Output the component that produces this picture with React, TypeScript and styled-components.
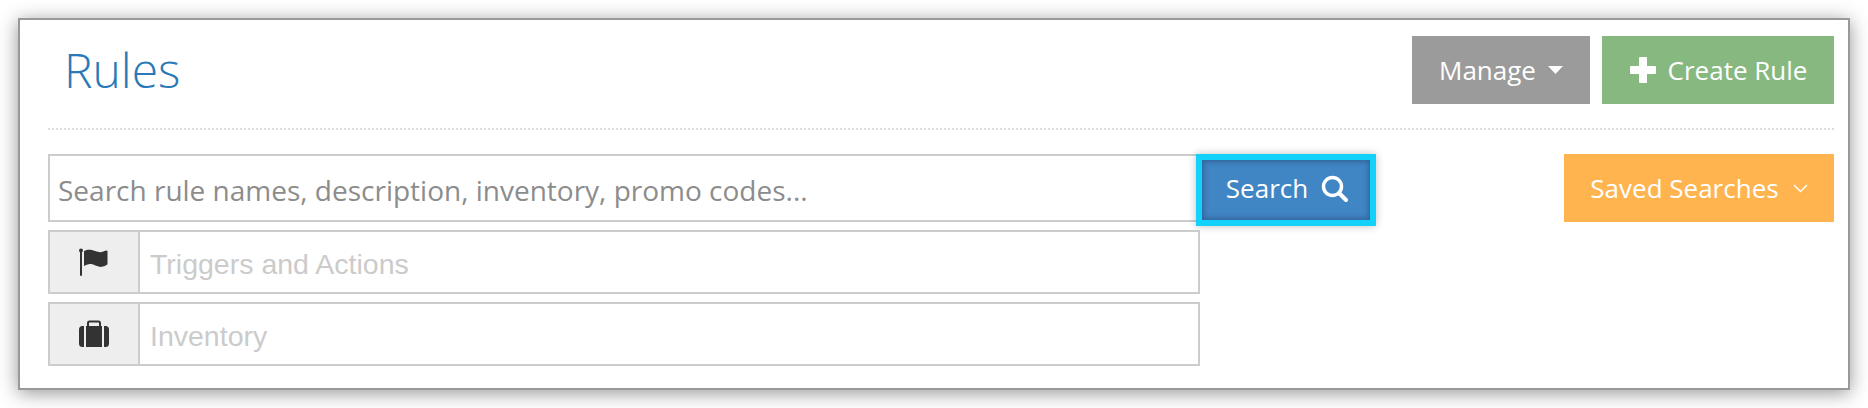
import styled, { createGlobalStyle } from "styled-components";

const GlobalStyle = createGlobalStyle`
    html, body {
        margin: 0;
        padding: 0;
        background: #ffffff;
    }
    * {
        box-sizing: border-box;
    }
`;

const Page = styled.div`
    width: 1868px;
    height: 408px;
    padding: 18px;
    overflow: hidden;
`;

const Panel = styled.section`
    width: 1832px;
    height: 372px;
    border: 2px solid #999;
    background: #fff;
    padding: 16px 14px 0 28px;
    box-shadow: 0 3px 18px rgba(0, 0, 0, 0.42);
`;

const Header = styled.header`
    display: flex;
    justify-content: space-between;
    align-items: flex-start;
    height: 94px;
    border-bottom: 2px dotted #ddd;
`;

const Title = styled.h1`
    margin: 0 0 0 16px;
    font-family: "Open Sans", sans-serif;
    font-weight: 300;
    font-size: 48px;
    line-height: 68px;
    color: #2a7ab8;
`;

const Actions = styled.div`
    display: flex;
    gap: 12px;
`;

const Button = styled.button<{ $bg: string; $width: number }>`
    display: flex;
    align-items: center;
    justify-content: center;
    height: 68px;
    width: ${({ $width }) => $width}px;
    border: 0;
    padding: 0;
    background: ${({ $bg }) => $bg};
    color: #fff;
    font-family: "Open Sans", sans-serif;
    font-size: 26px;
    font-weight: 400;
`;

const SearchArea = styled.div`
    display: flex;
    justify-content: space-between;
    align-items: flex-start;
    margin-top: 24px;
`;

const Filters = styled.div`
    display: flex;
    flex-direction: column;
    gap: 8px;
    width: 1152px;
`;

const SearchRow = styled.div`
    display: flex;
    width: 1328px;
    margin-bottom: -4px;
`;

const SearchInput = styled.input`
    width: 1150px;
    height: 68px;
    border: 2px solid #ccc;
    padding: 3px 8px 0;
    outline: none;
    font-family: "Open Sans", sans-serif;
    font-size: 28px;
    color: #555;

    &::placeholder {
        color: #8c8c8c;
        opacity: 1;
    }
`;

const SearchButton = styled.button`
    display: flex;
    align-items: center;
    justify-content: center;
    gap: 12px;
    flex: none;
    width: 180px;
    height: 72px;
    margin-left: -2px;
    border: 6px solid #12d1fb;
    padding: 0 0 4px 2px;
    background: #4085c4;
    color: #fff;
    font-family: "Open Sans", sans-serif;
    font-size: 26px;
    box-shadow: inset 0 0 5px 2px #33659c, 0 0 8px rgba(0, 0, 0, 0.25);
`;

const FilterRow = styled.div`
    display: flex;
    height: 64px;
    border: 2px solid #ccc;
`;

const FilterAddon = styled.div`
    display: flex;
    align-items: center;
    justify-content: center;
    flex: none;
    width: 90px;
    background: #eee;
    border-right: 2px solid #ccc;
`;

const FilterInput = styled.input`
    flex: 1;
    min-width: 0;
    border: 0;
    padding: 4px 10px 0;
    outline: none;
    font-family: "Liberation Sans", Arial, sans-serif;
    font-size: 28.5px;
    color: #555;

    &::placeholder {
        color: #cbcbcb;
        opacity: 1;
    }
`;

const Label = styled.span<{ $before?: number; $after?: number }>`
    margin-left: ${({ $before }) => $before ?? 0}px;
    margin-right: ${({ $after }) => $after ?? 0}px;
`;

const Caret = () => (
    <svg width="15" height="8" viewBox="0 0 15 8">
        <path d="M0 0h15L7.500 8z" fill="#fff" />
    </svg>
);

const Chevron = () => (
    <svg width="15" height="9" viewBox="0 0 15 9">
        <path d="M1 1l6.500 6.500L14 1" fill="none" stroke="#fff" strokeWidth="1.500" />
    </svg>
);

const Plus = () => (
    <svg width="28" height="28" viewBox="0 0 28 28">
        <path
            d="M10 2a1 1 0 0 1 1-1h6a1 1 0 0 1 1 1v8h8a1 1 0 0 1 1 1v6a1 1 0 0 1-1 1h-8v8a1 1 0 0 1-1 1h-6a1 1 0 0 1-1-1v-8H2a1 1 0 0 1-1-1v-6a1 1 0 0 1 1-1h8z"
            fill="#fff"
        />
    </svg>
);

const SearchIcon = () => (
    <svg width="28" height="28" viewBox="0 0 28 28">
        <circle cx="12.500" cy="12.500" r="9" fill="none" stroke="#fff" strokeWidth="3.500" />
        <path d="M19 19l7 7" stroke="#fff" strokeWidth="4" strokeLinecap="round" />
    </svg>
);

const FlagIcon = () => (
    <svg width="32" height="28" viewBox="0 0 32 28">
        <path d="M3 2v25" stroke="#333" strokeWidth="2" strokeLinecap="round" />
        <circle cx="3" cy="2.500" r="2" fill="#333" />
        <path
            d="M6 3c4-2 7-1.500 11 0 4 1.500 7 1.500 9.500 0 1-.6 3-1 3 .5V16c0 1-5 3.500-8 2.800-4-.8-6.500-3.300-10-2.800-2 .3-5.500 2-5.500 2z"
            fill="#333"
        />
    </svg>
);

const BriefcaseIcon = () => (
    <svg width="32" height="28" viewBox="0 0 32 28">
        <path d="M10 6V3a1.500 1.500 0 0 1 1.500-1.500h9A1.500 1.500 0 0 1 22 3v3" fill="none" stroke="#333" strokeWidth="2" />
        <path d="M4.500 6H6v21H4.500A3.500 3.500 0 0 1 1 23.500v-14A3.500 3.500 0 0 1 4.500 6z" fill="#333" />
        <path d="M8 6h16v21H8z" fill="#333" />
        <path d="M26 6h1.500A3.500 3.500 0 0 1 31 9.500v14a3.500 3.500 0 0 1-3.500 3.500H26z" fill="#333" />
    </svg>
);

export default function App() {
    return (
        <Page>
            <GlobalStyle />
            <Panel>
                <Header>
                    <Title>Rules</Title>
                    <Actions>
                        <Button $bg="#9b9b9b" $width={178}>
                            <Label $after={12}>Manage</Label>
                            <Caret />
                        </Button>
                        <Button $bg="#86b87f" $width={232}>
                            <Plus />
                            <Label $before={11}>Create Rule</Label>
                        </Button>
                    </Actions>
                </Header>
                <SearchArea>
                    <Filters>
                        <SearchRow>
                            <SearchInput placeholder="Search rule names, description, inventory, promo codes..." />
                            <SearchButton>
                                Search
                                <SearchIcon />
                            </SearchButton>
                        </SearchRow>
                        <FilterRow>
                            <FilterAddon>
                                <FlagIcon />
                            </FilterAddon>
                            <FilterInput placeholder="Triggers and Actions" />
                        </FilterRow>
                        <FilterRow>
                            <FilterAddon>
                                <BriefcaseIcon />
                            </FilterAddon>
                            <FilterInput placeholder="Inventory" />
                        </FilterRow>
                    </Filters>
                    <Button $bg="#ffb450" $width={270}>
                        <Label $after={14}>Saved Searches</Label>
                        <Chevron />
                    </Button>
                </SearchArea>
            </Panel>
        </Page>
    );
}
